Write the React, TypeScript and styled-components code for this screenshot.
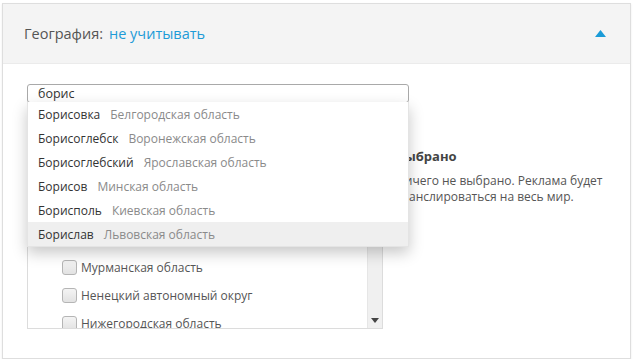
import styled, { createGlobalStyle } from "styled-components";

const GlobalStyle = createGlobalStyle`
  html, body {
    margin: 0;
    padding: 0;
    background: #ffffff;
    font-family: "Open Sans", "Noto Sans", sans-serif;
  }
`;

const Card = styled.div`
  margin: 3px 0 0 2px;
  width: 629px;
  height: 356px;
  border: 1px solid #dedede;
  box-shadow: 0 1px 2px rgba(0, 0, 0, 0.08);
  background: #fff;
  box-sizing: border-box;
  overflow: hidden;
`;

const Header = styled.div`
  height: 60px;
  background: #f4f4f4;
  border-bottom: 1px solid #ebebeb;
  display: flex;
  align-items: center;
  justify-content: space-between;
  padding: 0 24px 0 21px;
  box-sizing: border-box;
  font-size: 14.5px;
`;

const Label = styled.span`
  color: #555;
`;

const Value = styled.span`
  color: #1e9bd7;
  margin-left: 6px;
`;

const Body = styled.div`
  display: flex;
  padding: 20px 0 0 24px;
`;

const LeftCol = styled.div`
  position: relative;
  width: 356px;
  flex: none;
`;

const SearchInput = styled.div`
  width: 382px;
  height: 19px;
  border: 1px solid #a9a9a9;
  border-radius: 3px;
  box-sizing: border-box;
  font-size: 12.5px;
  line-height: 17px;
  color: #333;
  padding-left: 10px;
`;

const ListBox = styled.div`
  margin-top: 7px;
  width: 356px;
  height: 219px;
  border: 1px solid #dcdcdc;
  box-sizing: border-box;
  display: flex;
  overflow: hidden;
`;

const ListItems = styled.div`
  flex: 1;
  padding-top: 2px;
`;

const Item = styled.div<{ $level: number }>`
  height: 28px;
  display: flex;
  align-items: center;
  padding-left: ${(p) => 10 + p.$level * 24}px;
  font-size: 12px;
  color: #555;
`;

const Check = styled.span`
  width: 13px;
  height: 13px;
  border: 1px solid #b5b5b5;
  border-radius: 3px;
  background: linear-gradient(#f4f4f4, #e2e2e2);
  margin-right: 4px;
  flex: none;
`;

const ScrollBar = styled.div`
  width: 15px;
  background: #f0f0f0;
  border-left: 1px solid #e6e6e6;
  display: flex;
  flex-direction: column;
  justify-content: flex-end;
  align-items: center;
  padding-bottom: 5px;
  box-sizing: border-box;
`;

const Dropdown = styled.div`
  position: absolute;
  top: 18px;
  left: 0;
  width: 382px;
  background: #fff;
  box-shadow: 0 6px 14px rgba(0, 0, 0, 0.22);
  border: 1px solid #e4e4e4;
  border-top: none;
  box-sizing: border-box;
  z-index: 2;
`;

const Option = styled.div<{ $active?: boolean }>`
  height: 24px;
  display: flex;
  align-items: center;
  padding-left: 10px;
  font-size: 12px;
  background: ${(p) => (p.$active ? "#efefef" : "transparent")};
`;

const City = styled.span`
  color: #333;
`;

const Region = styled.span`
  color: #8a8a8a;
  margin-left: 10px;
`;

const RightCol = styled.div`
  width: 215px;
  padding: 63px 0 0 13px;
`;

const Title = styled.div`
  font-size: 13px;
  font-weight: 700;
  color: #444;
  margin-bottom: 8px;
`;

const Note = styled.div`
  font-size: 12px;
  line-height: 16px;
  color: #555;
`;

const options = [
  ["Борисовка", "Белгородская область"],
  ["Борисоглебск", "Воронежская область"],
  ["Борисоглебский", "Ярославская область"],
  ["Борисов", "Минская область"],
  ["Борисполь", "Киевская область"],
  ["Борислав", "Львовская область"],
];

const regions: [string, number][] = [
  ["Россия", 0],
  ["Ленинградская область", 1],
  ["Магаданская область", 1],
  ["Московская область", 1],
  ["Москва", 1],
  ["Мурманская область", 1],
  ["Ненецкий автономный округ", 1],
  ["Нижегородская область", 1],
];

const App = () => {
  return (
    <>
      <GlobalStyle />
      <Card>
        <Header>
          <div>
            <Label>География:</Label>
            <Value>не учитывать</Value>
          </div>
          <svg width="11" height="7" viewBox="0 0 11 7">
            <polygon points="5.5,0 11,7 0,7" fill="#1a9bd7" />
          </svg>
        </Header>
        <Body>
          <LeftCol>
            <SearchInput>борис</SearchInput>
            <ListBox>
              <ListItems>
                {regions.map(([name, level]) => (
                  <Item key={name} $level={level}>
                    <Check />
                    {name}
                  </Item>
                ))}
              </ListItems>
              <ScrollBar>
                <svg width="8" height="5" viewBox="0 0 8 5">
                  <polygon points="0,0 8,0 4,5" fill="#444" />
                </svg>
              </ScrollBar>
            </ListBox>
            <Dropdown>
              {options.map(([city, region], i) => (
                <Option key={city} $active={i === options.length - 1}>
                  <City>{city}</City>
                  <Region>{region}</Region>
                </Option>
              ))}
            </Dropdown>
          </LeftCol>
          <RightCol>
            <Title>Выбрано</Title>
            <Note>
              Ничего не выбрано. Реклама будет транслироваться на весь мир.
            </Note>
          </RightCol>
        </Body>
      </Card>
    </>
  );
};

export default App;
